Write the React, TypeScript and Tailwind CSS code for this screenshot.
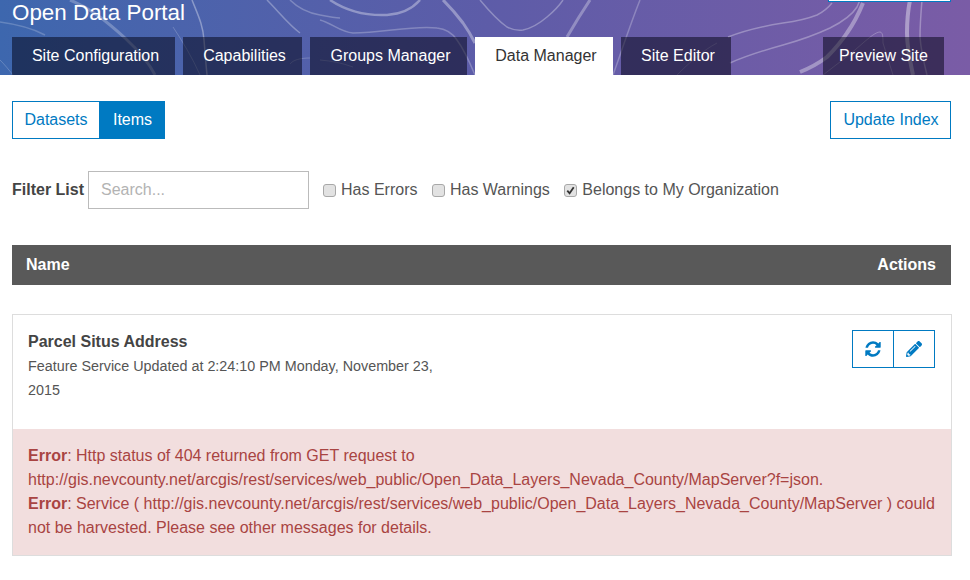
import React from 'react';
import { FaPencilAlt } from 'react-icons/fa';

const LEFT_TABS = [
  { label: 'Site Configuration', width: 'w-[163px]' },
  { label: 'Capabilities', width: 'w-[119px]' },
  { label: 'Groups Manager', width: 'w-[157px]' },
];

const Check: React.FC<{ label: string; checked?: boolean }> = ({ label, checked }) => (
  <label className="flex items-center">
    <span className="flex h-[13px] w-[13px] items-center justify-center rounded-[3px] border border-[#a8a8a8] bg-[#e2e2e2]">
      {checked && (
        <svg viewBox="0 0 12 12" className="h-[11px] w-[11px]">
          <path d="M2.5 6.2 5 9l4.5-6.5" fill="none" stroke="#333" strokeWidth="2" />
        </svg>
      )}
    </span>
    <span className="ml-[5px] text-[#555]">{label}</span>
  </label>
);

const Tab: React.FC<{ label: string; className: string }> = ({ label, className }) => (
  <a className={`flex h-[38px] items-center justify-center ${className}`}>{label}</a>
);

export default function App() {
  return (
    <div className="h-[580px] w-[970px] overflow-hidden bg-white font-['Liberation_Sans',Arial,sans-serif] text-base text-[#555]">
      {/* Banner */}
      <div className="relative h-[75px] bg-gradient-to-r from-[#3d67ae] via-[#5d5ca8] to-[#7a5ca6]">
        <svg className="absolute inset-0 h-full w-full" viewBox="0 0 970 75" fill="none" stroke="#fff">
          <path d="M70 0C90 8 105 20 125 38c15 14 25 27 30 37" strokeOpacity=".25" strokeWidth="3" />
          <path d="M0 22C15 24 30 27 45 35" strokeOpacity=".2" strokeWidth="1.5" />
          <path d="M0 60c5 5 9 10 13 15" strokeOpacity=".2" strokeWidth="1" />
          <path d="M192 0c6 15 11 25 12 40 1 12 2 25 3 35" strokeOpacity=".35" strokeWidth="1.5" />
          <path d="M173 27c10 15 20 32 27 48" strokeOpacity=".2" strokeWidth="1" />
          <path d="M267 0c12 12 22 25 33 33" strokeOpacity=".3" strokeWidth="1.5" />
          <path d="M290 0c8 8 18 13 30 15 10 2 15 3 20 3" strokeOpacity=".25" strokeWidth="1.5" />
          <path d="M290 64c3-4 10-6 20-6" strokeOpacity=".2" strokeWidth="1" />
          <path d="M330 0c15 10 35 16 57 15 15-1 26-7 33-15" strokeOpacity=".35" strokeWidth="2.5" />
          <path d="M443 0c8 8 14 15 20 23 5 7 9 14 12 20" strokeOpacity=".35" strokeWidth="3" />
          <path d="M320 20c12 3 20 12 33 13 30 0 60-8 84-5 10 1 16 6 20 12 8 11 13 23 18 35" strokeOpacity=".25" strokeWidth="1.5" />
          <path d="M320 60c12 1 22 3 33 7" strokeOpacity=".2" strokeWidth="1" />
          <path d="M480 0c10 12 17 20 27 27 6 3 10 4 16 3 10-2 17-7 24-13 6-5 12-11 16-17" strokeOpacity=".3" strokeWidth="1.5" />
          <path d="M590 0c-8 12-16 25-23 37" strokeOpacity=".3" strokeWidth="3" />
          <path d="M640 0c-10 25-18 50-27 75" strokeOpacity=".25" strokeWidth="1.5" />
          <path d="M728 37c18-7 36-11 55-14 15-2 24-4 34-8 6-3 11-7 15-12" strokeOpacity=".3" strokeWidth="1.5" />
          <path d="M677 75c12-12 25-24 40-32" strokeOpacity=".2" strokeWidth="1" />
          <path d="M730 63c18-8 35-13 53-18 18-5 32-10 47-17 12-6 22-13 27-21l3-7" strokeOpacity=".3" strokeWidth="1.5" />
          <path d="M863 3c-4 10-9 20-16 30-6 9-13 17-20 24-8 6-17 11-27 15" strokeOpacity=".35" strokeWidth="4" />
          <path d="M910 0c-2 10-3 22-3 33 0 15 3 28 6 42" strokeOpacity=".4" strokeWidth="4" />
          <path d="M922 0c-1 12-2 25-2 37 1 14 4 26 7 38" strokeOpacity=".3" strokeWidth="1.5" />
          <path d="M823 75c14-11 28-21 40-32 7-6 13-11 17-11 3 0 3 6 3 11 3 11 7 21 10 32" strokeOpacity=".25" strokeWidth="1" />
        </svg>
        <div className="absolute right-[19px] top-[-36px] h-[38px] w-[123px] border border-[#007ac2] bg-white" />
        <div className="relative flex h-full flex-col justify-between">
          <h1 className="pl-3 pt-px text-[22.4px] leading-6 text-white">Open Data Portal</h1>
          <div className="flex pl-3 pr-[26px]">
            <div className="flex gap-2">
              {LEFT_TABS.map(t => (
                <Tab key={t.label} label={t.label} className={`${t.width} bg-[#000010]/50 pl-1 text-white`} />
              ))}
              <Tab label="Data Manager" className="w-[138px] bg-white pl-1 text-[#333]" />
              <Tab label="Site Editor" className="w-[110px] bg-[#000010]/50 pl-1 text-white" />
            </div>
            <Tab label="Preview Site" className="ml-auto w-[121px] bg-[#000010]/50 text-white" />
          </div>
        </div>
      </div>

      <div className="px-3">
        {/* Datasets / Items switch */}
        <div className="mt-[26px] flex h-[38px] justify-between pr-[7px]">
          <div className="flex">
            <a className="flex w-[88px] items-center justify-center border border-[#007ac2] text-[#007ac2]">Datasets</a>
            <a className="flex w-[65px] items-center justify-center bg-[#007ac2] text-white">Items</a>
          </div>
          <a className="flex w-[121px] items-center justify-center border border-[#007ac2] pl-px text-[#007ac2]">Update Index</a>
        </div>

        {/* Filter */}
        <div className="mt-8 flex h-[38px] items-center">
          <span className="w-[76px] font-bold text-[#444]">Filter List</span>
          <input
            placeholder="Search..."
            className="h-[38px] w-[221px] border border-[#bbb] px-3 text-base placeholder:text-[#b3b3b3]"
          />
          <div className="ml-[14px] flex gap-[14.5px]">
            <Check label="Has Errors" />
            <Check label="Has Warnings" />
            <Check label="Belongs to My Organization" checked />
          </div>
        </div>

        {/* Table head */}
        <div className="mt-9 flex h-10 w-[939px] items-center justify-between bg-[#595959] pl-[14px] pr-[15px] font-bold text-white">
          <span>Name</span>
          <span>Actions</span>
        </div>

        {/* Item */}
        <div className="mt-[29px] w-[940px] border border-[#ddd]">
          <div className="flex h-[114px] justify-between pl-[15px] pr-4 pt-[15px]">
            <div className="w-[420px]">
              <h2 className="font-bold leading-6 text-[#444]">Parcel Situs Address</h2>
              <p className="text-[14.35px] leading-6">Feature Service Updated at 2:24:10 PM Monday, November 23, 2015</p>
            </div>
            <div className="flex h-[38px]">
              <button className="flex w-[42px] items-center justify-center border border-[#007ac2] text-[#007ac2]">
                <svg viewBox="0 0 1792 1792" fill="currentColor" className="mb-px h-[18px] w-[18px]">
                  <path d="M1639 1056q0 5-1 7-64 268-268 434.5t-478 166.5q-146 0-282.5-55t-243.5-157l-129 129q-19 19-45 19t-45-19-19-45v-448q0-26 19-45t45-19h448q26 0 45 19t19 45-19 45l-137 137q71 66 161 102t187 36q134 0 250-65t186-179q11-17 53-117 8-23 30-23h192q13 0 22.5 9.5t9.5 22.5zm25-800v448q0 26-19 45t-45 19h-448q-26 0-45-19t-19-45 19-45l138-138q-148-137-349-137-134 0-250 65t-186 179q-11 17-53 117-8 23-30 23h-199q-13 0-22.5-9.5t-9.5-22.5v-7q65-268 270-434.5t480-166.5q146 0 284 55.5t245 156.5l130-129q19-19 45-19t45 19 19 45z" />
                </svg>
              </button>
              <button className="-ml-px flex w-[42px] items-center justify-center border border-[#007ac2] text-[#007ac2]">
                <FaPencilAlt className="mb-px h-4 w-4" />
              </button>
            </div>
          </div>
          <div className="bg-[#f2dede] p-[15px] leading-6 text-[#a94442]">
            <p>
              <b>Error</b>: Http status of 404 returned from GET request to
              <br />
              http://gis.nevcounty.net/arcgis/rest/services/web_public/Open_Data_Layers_Nevada_County/MapServer?f=json.
            </p>
            <p>
              <b>Error</b>: Service ( http://gis.nevcounty.net/arcgis/rest/services/web_public/Open_Data_Layers_Nevada_County/MapServer ) could not be harvested. Please see other messages for details.
            </p>
          </div>
        </div>
      </div>
    </div>
  );
}
